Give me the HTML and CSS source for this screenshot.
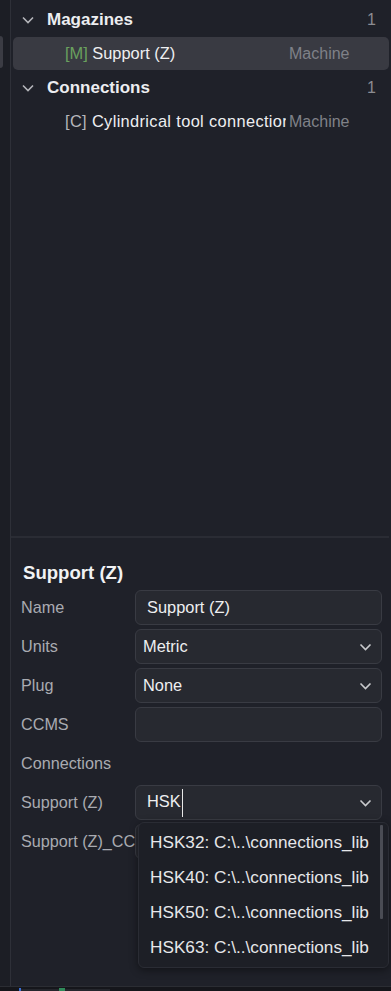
FILE: index.html
```html
<!DOCTYPE html>
<html lang="en">
<head>
    <meta charset="UTF-8">
    <meta name="viewport" content="width=device-width">
    <title>Tool library</title>
    <link rel="stylesheet" href="styles.css">
</head>
<body>
<div class="app">
    <aside class="rail">
        <div class="rail-sel"></div>
    </aside>
    <main class="main">
        <section class="tree">
            <div class="group">
                <svg class="chev" width="12" height="8" viewBox="0 0 12 8"><path d="M1 1.5l5 5 5-5" fill="none" stroke="#b4b5ba" stroke-width="1.6"/></svg>
                <span class="group-name">Magazines</span>
                <span class="count">1</span>
            </div>
            <div class="item selected">
                <span class="item-name"><span class="tag tag-m">[M]</span> Support (Z)</span>
                <span class="owner">Machine</span>
            </div>
            <div class="group">
                <svg class="chev" width="12" height="8" viewBox="0 0 12 8"><path d="M1 1.5l5 5 5-5" fill="none" stroke="#b4b5ba" stroke-width="1.6"/></svg>
                <span class="group-name">Connections</span>
                <span class="count">1</span>
            </div>
            <div class="item">
                <span class="item-name wide"><span class="tag">[C]</span> Cylindrical tool connection</span>
                <span class="owner">Machine</span>
            </div>
        </section>
        <div class="divider"></div>
        <section class="props">
            <h2 class="props-title">Support (Z)</h2>
            <div class="row">
                <label>Name</label>
                <div class="field"><span class="value">Support (Z)</span></div>
            </div>
            <div class="row">
                <label>Units</label>
                <div class="field select"><span class="value">Metric</span>
                    <svg class="down" width="13" height="8" viewBox="0 0 13 8"><path d="M1.5 1.5l5 5 5-5" fill="none" stroke="#c9cacd" stroke-width="1.6"/></svg>
                </div>
            </div>
            <div class="row">
                <label>Plug</label>
                <div class="field select"><span class="value">None</span>
                    <svg class="down" width="13" height="8" viewBox="0 0 13 8"><path d="M1.5 1.5l5 5 5-5" fill="none" stroke="#c9cacd" stroke-width="1.6"/></svg>
                </div>
            </div>
            <div class="row">
                <label>CCMS</label>
                <div class="field"></div>
            </div>
            <div class="row">
                <label>Connections</label>
            </div>
            <div class="row">
                <label>Support (Z)</label>
                <div class="field combo">
                    <span class="value">HSK<span class="caret"></span></span>
                    <svg class="down" width="13" height="8" viewBox="0 0 13 8"><path d="M1.5 1.5l5 5 5-5" fill="none" stroke="#c9cacd" stroke-width="1.6"/></svg>
                    <ul class="popup">
                        <li>HSK32: C:\..\connections_lib</li>
                        <li>HSK40: C:\..\connections_lib</li>
                        <li>HSK50: C:\..\connections_lib</li>
                        <li>HSK63: C:\..\connections_lib</li>
                        <span class="scroll"></span>
                    </ul>
                </div>
            </div>
            <div class="row">
                <label>Support (Z)_CCMS</label>
                <div class="field"></div>
            </div>
        </section>
    </main>
</div>
<footer class="status">
    <span class="st st-a"></span>
    <span class="st st-blue"></span>
    <span class="st st-b"></span>
    <span class="st st-green"></span>
    <span class="st st-c"></span>
</footer>
</body>
</html>
```

FILE: styles.css
```css
body,html{
    margin:0;
    width:100%;
    height:100%;
    overflow:hidden;
    background:#1f2129;
    font-family:"Liberation Sans",Arial,sans-serif;
    font-size:16px;
    color:#e4e5e8;
}
.app{
    display:flex;
    height:986px;
}
.rail{
    width:10px;
    flex:none;
    background:#1c1e25;
    border-right:1px solid #2e3038;
    padding-top:36px;
    box-sizing:content-box;
}
.rail-sel{
    width:3px;
    height:32px;
    background:#3b3c44;
    border-radius:0 3px 3px 0;
}
.main{
    flex:1;
    display:flex;
    flex-direction:column;
    min-width:0;
}
.tree{
    height:533px;
    padding-top:3px;
}
.group,.item{
    height:33px;
    display:flex;
    align-items:center;
    margin:0 2px 1px 2px;
    border-radius:5px;
}
.group{
    padding-left:9px;
    padding-right:13px;
}
.chev{
    margin-right:13px;
}
.group-name{
    font-weight:bold;
    font-size:17px;
    color:#ecedf0;
    flex:1;
}
.count{
    color:#8b8c92;
    font-size:16px;
}
.item{
    padding-left:52px;
}
.item.selected{
    background:#393a42;
}
.item-name{
    width:221px;
    white-space:nowrap;
    overflow:hidden;
    font-size:16.4px;
    color:#eeeff1;
}
.item-name.wide{
    letter-spacing:0.35px;
}
.tag{
    color:#b6b7bb;
}
.tag-m{
    color:#6aa05e;
}
.owner{
    margin-left:3px;
    color:#7f8188;
    font-size:16px;
}
.divider{
    height:2px;
    background:#2a2c34;
    margin-right:2px;
}
.props{
    padding:22px 9px 0 10px;
}
.props-title{
    margin:0 0 5px 2px;
    font-size:18.6px;
    line-height:25px;
    font-weight:bold;
    color:#f1f2f4;
}
.row{
    display:flex;
    align-items:center;
    height:35px;
    margin-bottom:4px;
}
.row label{
    width:114px;
    flex:none;
    color:#a9abb1;
    font-size:16.2px;
    white-space:nowrap;
    overflow:hidden;
}
.field{
    position:relative;
    flex:1;
    height:35px;
    box-sizing:border-box;
    background:#272930;
    border:1px solid #393b43;
    border-radius:6px;
    display:flex;
    align-items:center;
    padding:0 11px;
}
.field .value{
    flex:1;
    font-size:16.4px;
    color:#eeeff1;
}
.field.select{
    padding-left:7px;
}
.down{
    margin-right:-2px;
}
.caret{
    display:inline-block;
    width:1px;
    height:28px;
    background:#e8e8e8;
    vertical-align:middle;
    margin-left:1px;
}
.popup{
    position:absolute;
    top:36px;
    left:2px;
    width:251px;
    margin:0;
    padding:2px 0 2px 0;
    list-style:none;
    box-sizing:border-box;
    background:#1d1f26;
    border:1px solid #2a2c34;
    border-radius:6px;
    box-shadow:0 2px 8px rgba(0,0,0,0.45);
    z-index:2;
}
.popup li{
    height:35px;
    line-height:35px;
    padding-left:11px;
    font-size:17.2px;
    color:#e6e7ea;
    white-space:nowrap;
}
.scroll{
    position:absolute;
    right:5px;
    top:2px;
    width:3px;
    height:94px;
    background:#4a4c54;
    border-radius:1px;
}
.status{
    height:5px;
    border-top:1px solid #2b2d33;
    background:#15161b;
    display:flex;
    align-items:flex-end;
}
.st{
    height:3px;
    display:block;
}
.st-a{width:19px;}
.st-blue{width:2px;height:4px;background:#3a6fd8;}
.st-b{width:38px;background:#24262c;}
.st-green{width:6px;height:4px;background:#2f8a5a;}
.st-c{width:45px;background:#24262c;}
```
